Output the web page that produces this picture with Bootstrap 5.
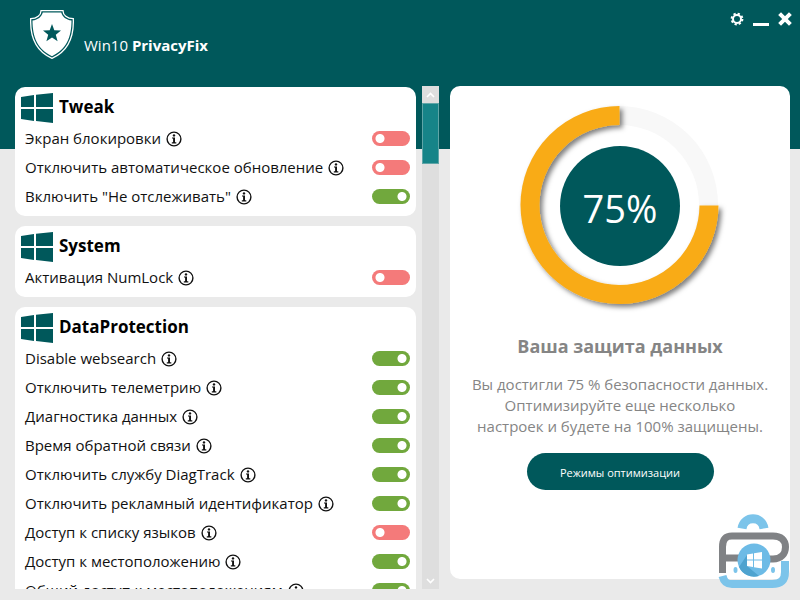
<!DOCTYPE html>
<html lang="ru">
<head>
<meta charset="utf-8">
<meta name="viewport" content="width=device-width, initial-scale=1">
<title>Win10 PrivacyFix</title>
<link href="https://cdn.jsdelivr.net/npm/bootstrap@5.3.0/dist/css/bootstrap.min.css" rel="stylesheet">
<style>
:root { --teal: #00585b; --page: #eaeaea; --amber: #f9ab17; }
body { font-family: "Open Sans", "Noto Sans", sans-serif; font-size: 15px; line-height: 21px; color: #111;
  background: linear-gradient(var(--teal) 149px, var(--page) 149px); }
.topbar { height: 86px; padding: 10px 3px 0 30px; color: #fff; }
.brand-name { margin: 25px 0 0 10px; }
.win-btn { width: 24px; height: 18px; color: #fff; }
.workspace { min-height: 0; padding: 0 10px 11px 15px; }
.options { width: 401px; padding-top: 1px; gap: 10px; }
.group { background: #fff; border-radius: 10px; padding-bottom: 5px; }
.group-head { height: 37px; padding: 6px 6px 0; gap: 6px; }
.group-head h2 { font-size: 17px; line-height: 28px; font-weight: 700; color: #000; }
.option { height: 29px; padding: 0 6px 0 10px; }
.info { width: 16px; height: 16px; margin-left: 5px; color: #111; }
.form-check-input.toggle { width: 38px; height: 15px; margin: 0; border: 0; border-radius: 8px; background-color: #f47a7a;
  background-image: radial-gradient(circle at 8px 50%, #fff 4px, transparent 5px); }
.form-check-input.toggle:checked { background-color: #71a83d;
  background-image: radial-gradient(circle at 30px 50%, #fff 4px, transparent 5px); }
.scroller { width: 17px; margin: 0 11px 0 6px; background: #dedede; color: #fff; }
.scroller svg { width: 17px; height: 17px; }
.thumb { height: 61px; background: #168488; border: 1px solid #5fa5a7; }
.score { background: #fff; border-radius: 10px; margin-bottom: 10px; padding-top: 10px; color: #858585; }
.gauge { width: 220px; height: 220px; }
.gauge text { font-size: 38px; fill: #fff; }
.score h1 { font-size: 18px; line-height: 24px; font-weight: 700; margin: 18px 0 16px; }
.score p { margin-bottom: 16px; }
.mode-btn { width: 187px; height: 37px; padding: 2px 0 0; font-size: 11px; line-height: 18px; color: #fff; background: var(--teal); }
.mode-btn:hover { color: #fff; background: #04696c; }
.mark-logo { right: 10px; bottom: 11px; width: 72px; height: 76px; }
</style>
</head>
<body class="vh-100 overflow-hidden d-flex flex-column">
<svg class="d-none" aria-hidden="true">
  <symbol id="windows" viewBox="0 0 32 30"><path fill="#00585b" d="M0 4 13 2V14H0ZM15 1.7 32 0V14H15ZM0 16H13V28L0 26ZM15 16H32V30L15 28Z"/></symbol>
  <symbol id="info" viewBox="0 0 16 16"><circle cx="8" cy="8" r="6.9" fill="none" stroke="currentColor" stroke-width="1.4"/><circle cx="8" cy="4.4" r="1.2" fill="currentColor"/><path fill="currentColor" d="M6 6.5H9V11.3H10.3V12.4H5.8V11.3H7.1V7.6H6Z"/></symbol>
</svg>

<header class="topbar d-flex align-items-start flex-shrink-0">
  <svg width="44" height="49" viewBox="0 0 44 49" aria-hidden="true">
    <path fill="none" stroke="#fff" stroke-width="1.3" d="M11 .7H33C33 5 37 8.700 43.300 8.700C44 27 39 41 22 48.300C5 41 0 27 .7 8.700C7 8.700 11 5 11 .7Z"/>
    <path fill="#fff" d="M12.800 2.600H31.200C32.500 7 36 10 41.500 10.600C41.500 27 36.500 39.500 22 46.200C7.500 39.500 2.500 27 2.500 10.600C8 10 11.500 7 12.800 2.600Z"/>
    <path fill="#00585b" d="M22 14 24.300 20.200 31 20.500 25.800 24.700 27.600 31.200 22 27.500 16.400 31.200 18.200 24.700 13 20.500 19.700 20.200Z"/>
  </svg>
  <div class="brand-name">Win10 <strong>PrivacyFix</strong></div>
  <div class="ms-auto d-flex">
    <button class="win-btn btn p-0 border-0 d-flex justify-content-center align-items-center" aria-label="Настройки">
      <svg width="14" height="14" viewBox="0 0 14 14"><circle cx="7" cy="7" r="5.400" fill="none" stroke="#fff" stroke-width="2" stroke-dasharray="2.240 2"/><circle cx="7" cy="7" r="4" fill="none" stroke="#fff" stroke-width="2"/></svg>
    </button>
    <button class="win-btn btn p-0 border-0 d-flex justify-content-center align-items-center" aria-label="Свернуть">
      <svg width="16" height="14" viewBox="0 0 16 14"><path fill="#fff" d="M0 11H16V14H0Z"/></svg>
    </button>
    <button class="win-btn btn p-0 border-0 d-flex justify-content-center align-items-center" aria-label="Закрыть">
      <svg width="14" height="14" viewBox="0 0 14 14"><path stroke="#fff" stroke-width="4" d="M1.600 1.600 12.400 12.400M12.400 1.600 1.600 12.400"/></svg>
    </button>
  </div>
</header>

<main class="workspace d-flex flex-fill">
  <div class="options d-flex flex-column flex-shrink-0 overflow-hidden">
    <section class="group flex-shrink-0">
      <div class="group-head d-flex"><svg width="32" height="30"><use href="#windows"/></svg><h2 class="m-0">Tweak</h2></div>
      <div class="option d-flex align-items-center"><label for="o1">Экран блокировки</label><svg class="info"><use href="#info"/></svg><input class="form-check-input toggle ms-auto" type="checkbox" role="switch" id="o1"></div>
      <div class="option d-flex align-items-center"><label for="o2">Отключить автоматическое обновление</label><svg class="info"><use href="#info"/></svg><input class="form-check-input toggle ms-auto" type="checkbox" role="switch" id="o2"></div>
      <div class="option d-flex align-items-center"><label for="o3">Включить "Не отслеживать"</label><svg class="info"><use href="#info"/></svg><input class="form-check-input toggle ms-auto" type="checkbox" role="switch" id="o3" checked></div>
    </section>
    <section class="group flex-shrink-0">
      <div class="group-head d-flex"><svg width="32" height="30"><use href="#windows"/></svg><h2 class="m-0">System</h2></div>
      <div class="option d-flex align-items-center"><label for="o4">Активация NumLock</label><svg class="info"><use href="#info"/></svg><input class="form-check-input toggle ms-auto" type="checkbox" role="switch" id="o4"></div>
    </section>
    <section class="group flex-shrink-0">
      <div class="group-head d-flex"><svg width="32" height="30"><use href="#windows"/></svg><h2 class="m-0">DataProtection</h2></div>
      <div class="option d-flex align-items-center"><label for="o5">Disable websearch</label><svg class="info"><use href="#info"/></svg><input class="form-check-input toggle ms-auto" type="checkbox" role="switch" id="o5" checked></div>
      <div class="option d-flex align-items-center"><label for="o6">Отключить телеметрию</label><svg class="info"><use href="#info"/></svg><input class="form-check-input toggle ms-auto" type="checkbox" role="switch" id="o6" checked></div>
      <div class="option d-flex align-items-center"><label for="o7">Диагностика данных</label><svg class="info"><use href="#info"/></svg><input class="form-check-input toggle ms-auto" type="checkbox" role="switch" id="o7" checked></div>
      <div class="option d-flex align-items-center"><label for="o8">Время обратной связи</label><svg class="info"><use href="#info"/></svg><input class="form-check-input toggle ms-auto" type="checkbox" role="switch" id="o8" checked></div>
      <div class="option d-flex align-items-center"><label for="o9">Отключить службу DiagTrack</label><svg class="info"><use href="#info"/></svg><input class="form-check-input toggle ms-auto" type="checkbox" role="switch" id="o9" checked></div>
      <div class="option d-flex align-items-center"><label for="o10">Отключить рекламный идентификатор</label><svg class="info"><use href="#info"/></svg><input class="form-check-input toggle ms-auto" type="checkbox" role="switch" id="o10" checked></div>
      <div class="option d-flex align-items-center"><label for="o11">Доступ к списку языков</label><svg class="info"><use href="#info"/></svg><input class="form-check-input toggle ms-auto" type="checkbox" role="switch" id="o11"></div>
      <div class="option d-flex align-items-center"><label for="o12">Доступ к местоположению</label><svg class="info"><use href="#info"/></svg><input class="form-check-input toggle ms-auto" type="checkbox" role="switch" id="o12" checked></div>
      <div class="option d-flex align-items-center"><label for="o13">Общий доступ к местоположениям</label><svg class="info"><use href="#info"/></svg><input class="form-check-input toggle ms-auto" type="checkbox" role="switch" id="o13" checked></div>
    </section>
  </div>

  <div class="scroller d-flex flex-column flex-shrink-0" aria-hidden="true">
    <svg viewBox="0 0 17 17"><path fill="none" stroke="#fff" stroke-width="1.600" d="M5 11 8.500 7.500 12 11"/></svg>
    <div class="thumb"></div>
    <svg class="mt-auto" viewBox="0 0 17 17"><path fill="none" stroke="#fff" stroke-width="1.600" d="M5 7 8.500 10.500 12 7"/></svg>
  </div>

  <section class="score flex-fill d-flex flex-column align-items-center text-center">
    <svg class="gauge flex-shrink-0" viewBox="0 0 220 220" role="img" aria-label="75%">
      <defs><filter id="shade" x="-10%" y="-10%" width="125%" height="125%"><feDropShadow dx="3" dy="3" stdDeviation="2.500" flood-color="#000" flood-opacity=".5"/></filter></defs>
      <circle cx="109" cy="109" r="89.500" fill="none" stroke="#f8f8f8" stroke-width="19"/>
      <path filter="url(#shade)" fill="none" stroke="#f9ab17" stroke-width="19" d="M199 109.500A89.500 89.500 0 1 1 109.500 19.500"/>
      <circle cx="110" cy="110" r="60" fill="#00585b"/>
      <text x="110" y="127" text-anchor="middle">75%</text>
    </svg>
    <h1>Ваша защита данных</h1>
    <p>Вы достигли 75 % безопасности данных.<br>Оптимизируйте еще несколько<br>настроек и будете на 100% защищены.</p>
    <button class="mode-btn btn rounded-pill border-0">Режимы оптимизации</button>
  </section>
</main>

<svg class="mark-logo position-absolute" viewBox="0 0 72 76" aria-hidden="true">
  <path fill="none" stroke="#7cc4ea" stroke-width="9" d="M24 15.500C26 2.500 44 2.500 46 15.500"/>
  <path fill="none" stroke="#7cc4ea" stroke-width="8" d="M4.500 63C6 69 9 71 14 71H54C63 71 67 67 67 59V48"/>
  <path fill="none" stroke="#808285" stroke-width="7" d="M4.500 60V34C4.500 26 8 23 14 23H55C63 23 67.500 27 67.500 34C67.500 41 63 46 55 46H48M5 45H22"/>
  <ellipse cx="17.500" cy="57" rx="2" ry="3" fill="#7cc4ea"/><ellipse cx="55" cy="57" rx="2" ry="3" fill="#7cc4ea"/>
  <circle cx="36" cy="47" r="16.500" fill="#6dbbe6"/>
  <path fill="#4fa3cf" d="M29 53 41 63A16.500 16.500 0 0 1 21 54L29 42Z"/>
  <path fill="#fff" d="M29 41.500 35 40.500V46.500H29ZM36 40.300 44 39V46.500H36ZM29 47.500H35V54L29 53ZM36 47.500H44V55.500L36 54.200Z"/>
</svg>
<script src="https://cdn.jsdelivr.net/npm/bootstrap@5.3.0/dist/js/bootstrap.bundle.min.js"></script>
</body>
</html>
